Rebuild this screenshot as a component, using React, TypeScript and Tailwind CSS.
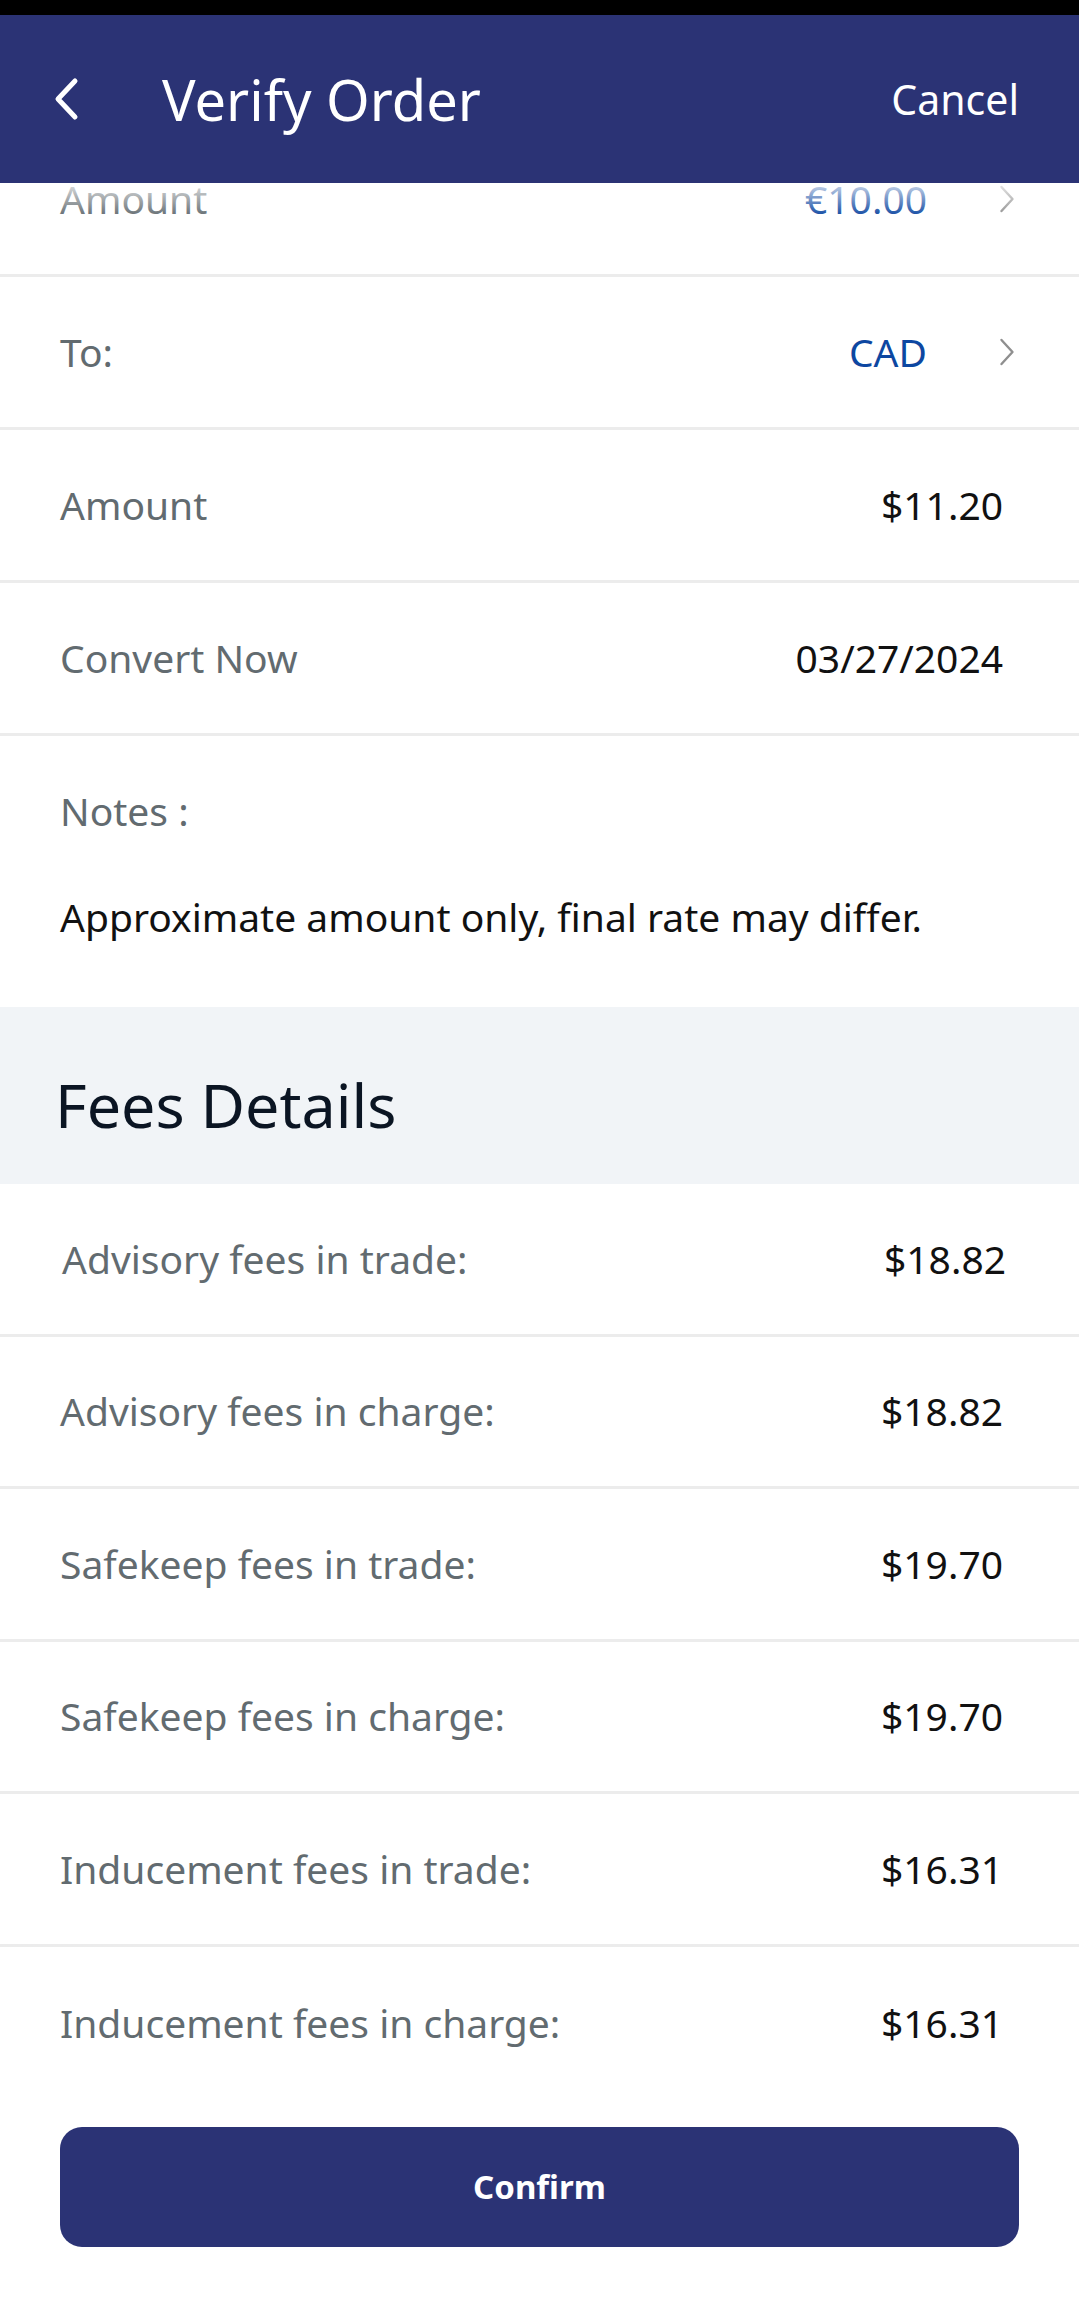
const font = { fontFamily: '"Noto Sans", "Open Sans", sans-serif' };

type Row = { label: string; value: string; link?: boolean; first?: boolean };

const orderRows: Row[] = [
	{ label: "Amount", value: "€10.00", link: true },
	{ label: "To:", value: "CAD", link: true },
	{ label: "Amount", value: "$11.20" },
	{ label: "Convert Now", value: "03/27/2024" },
];

const feeRows: Row[] = [
	{ label: "Advisory fees in trade:", value: "$18.82", first: true },
	{ label: "Advisory fees in charge:", value: "$18.82" },
	{ label: "Safekeep fees in trade:", value: "$19.70" },
	{ label: "Safekeep fees in charge:", value: "$19.70" },
	{ label: "Inducement fees in trade:", value: "$16.31" },
	{ label: "Inducement fees in charge:", value: "$16.31" },
];

const BackIcon = () => (
	<svg width="26" height="44" viewBox="0 0 26 44" fill="none">
		<path d="M22 4 L5 22 L22 40" stroke="white" strokeWidth="5" strokeLinecap="round" strokeLinejoin="round" />
	</svg>
);

const NextIcon = () => (
	<svg width="16" height="28" viewBox="0 0 16 28" fill="none">
		<path d="M2.5 2 L13.5 14 L2.5 26" stroke="#8f8f8f" strokeWidth="2.4" strokeLinecap="round" strokeLinejoin="round" />
	</svg>
);

const DetailRow = ({ row, last, fee }: { row: Row; last?: boolean; fee?: boolean }) => {
	return (
		<div
			className={`flex items-center justify-between ${fee ? "h-[152.5px]" : "h-[153px]"} ${
				last ? "" : "border-b-[3px] border-[#ececec]"
			} ${row.link ? "pl-[60px] pr-[64px]" : row.first ? "pl-[62px] pr-[73px]" : "pl-[60px] pr-[76px]"}`}
		>
			<div className="text-[39px] leading-[48px] text-[#626b70]">{row.label}</div>
			{row.link ? (
				<div className="flex items-center gap-[72px]">
					<div className="text-[39px] leading-[48px] text-[#0d47a1]">{row.value}</div>
					<NextIcon />
				</div>
			) : (
				<div className="text-[39px] leading-[48px] text-[#111111]">{row.value}</div>
			)}
		</div>
	);
};

const App = () => {
	return (
		<div className="relative min-h-[2307px] w-full bg-white" style={font}>
			{/* header sits over the scrolled list */}
			<div className="absolute inset-x-0 top-0 z-10">
				<div className="h-[15px] bg-black"></div>
				<div className="flex h-[168px] items-center bg-[#2b3375] pl-[53px] pr-[60px]">
					<BackIcon />
					<div className="ml-[83px] text-[56px] leading-[64px] text-white">Verify Order</div>
					<div className="ml-auto text-[41px] leading-[48px] text-white">Cancel</div>
				</div>
				<div className="h-[34px] bg-gradient-to-b from-white/80 to-white/0"></div>
			</div>

			<div className="pt-[124px]">
				{orderRows.map((row, i) => (
					<DetailRow key={i} row={row} />
				))}

				<div className="pl-[60px] pr-[60px] pt-[51px] pb-[66px]">
					<div className="text-[39px] leading-[48px] text-[#626b70]">Notes :</div>
					<div className="mt-[58px] text-[39px] leading-[48px] text-[#111111]">
						Approximate amount only, final rate may differ.
					</div>
				</div>

				<div className="flex h-[177px] items-center bg-[#f1f4f7] pl-[55px] pt-[18px]">
					<div className="text-[61px] leading-[72px] text-[#0b1523]">Fees Details</div>
				</div>

				{feeRows.map((row, i) => (
					<DetailRow key={i} row={row} fee last={i === feeRows.length - 1} />
				))}

				<div className="px-[60px] pt-[28px] pb-[60px]">
					<button className="flex h-[120px] w-full items-center justify-center rounded-[22px] bg-[#2b3375] text-[33px] font-bold text-white">
						Confirm
					</button>
				</div>
			</div>
		</div>
	);
};

export default App;
